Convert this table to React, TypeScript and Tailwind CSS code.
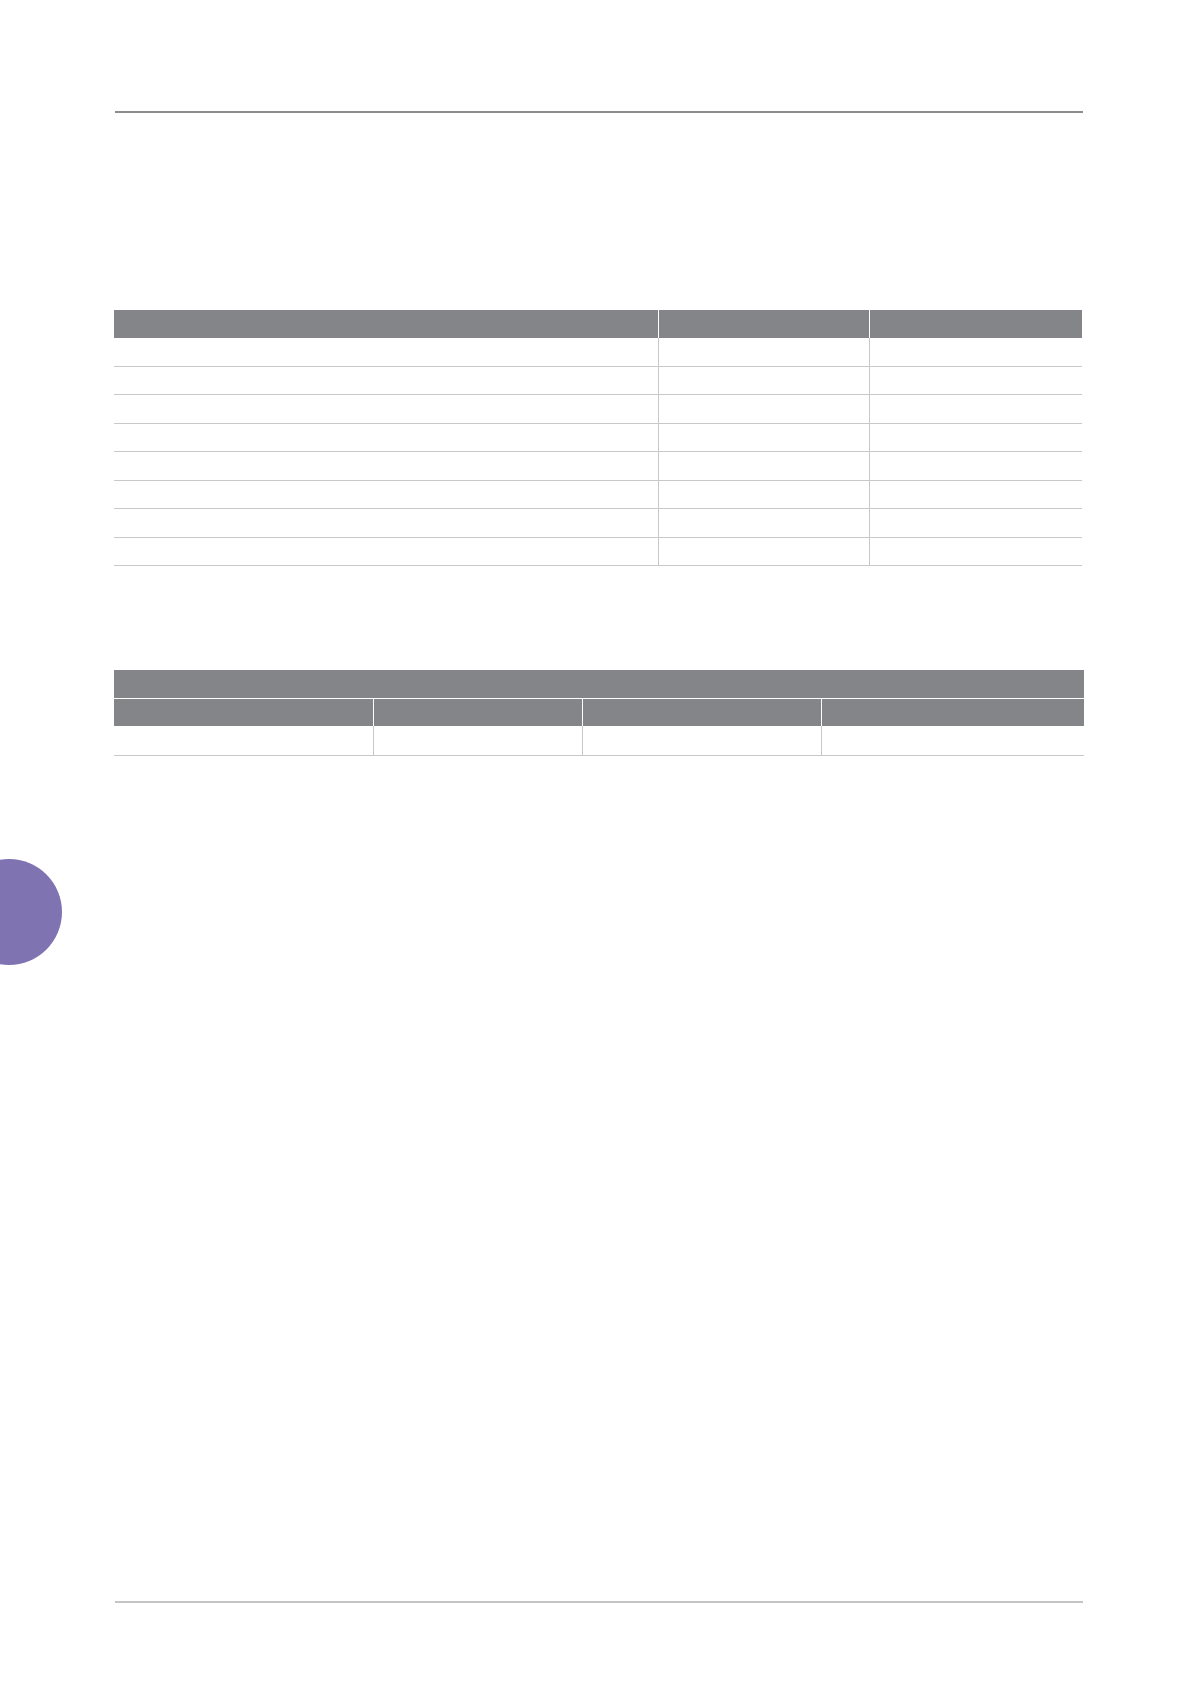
const HEAD = "bg-[#848588]";
const RULE = "border-[#c8c8c8]";

// first table: 3 columns, 8 empty body rows
const T1_COLS = ["w-[544px]", "w-[211px]", "w-[213px]"];
// second table: spanning header, 4 columns, 1 body row
const T2_COLS = ["w-[259px]", "w-[209px]", "w-[239px]", "w-[263px]"];

function EmptyRow({ cols, h = "h-[28.5px]" }: { cols: string[]; h?: string }) {
  return (
    <div className={`flex ${h} border-b ${RULE} box-border`}>
      {cols.map((w, i) => (
        <div key={i} className={`${w} shrink-0 ${i > 0 ? `border-l ${RULE}` : ""}`} />
      ))}
    </div>
  );
}

function HeadRow({ cols, h }: { cols: string[]; h: string }) {
  return (
    <div className={`flex ${h} ${HEAD}`}>
      {cols.map((w, i) => (
        <div key={i} className={`${w} shrink-0 ${i > 0 ? "border-l border-white" : ""}`} />
      ))}
    </div>
  );
}

export default function App() {
  return (
    <div
      className="relative w-[1196px] h-[1692px] overflow-hidden bg-white"
      style={{ fontFamily: '"Open Sans", "Liberation Sans", sans-serif' }}
    >
      <div className="flex flex-col pt-[111px]">
        {/* top running rule */}
        <div className="ml-[115px] w-[968px] h-[2px] bg-[#8c8c8c]" />

        {/* table 1 */}
        <div className="ml-[114px] mt-[197px] w-[968px] flex flex-col">
          <HeadRow cols={T1_COLS} h="h-[28px]" />
          {Array.from({ length: 8 }).map((_, i) => (
            <EmptyRow key={i} cols={T1_COLS} />
          ))}
        </div>

        {/* table 2 */}
        <div className="ml-[114px] mt-[104px] w-[970px] flex flex-col">
          <div className={`h-[28px] ${HEAD}`} />
          <div className="h-px bg-white" />
          <HeadRow cols={T2_COLS} h="h-[27px]" />
          <EmptyRow cols={T2_COLS} h="h-[30px]" />
        </div>

        {/* chapter tab marker */}
        <div className="ml-[-44px] mt-[103px] w-[106px] h-[106px] rounded-full bg-[#7f73b1]" />

        {/* bottom running rule */}
        <div className="ml-[115px] mt-[636px] w-[968px] h-[2px] bg-[#c4c4c4]" />
      </div>
    </div>
  );
}
